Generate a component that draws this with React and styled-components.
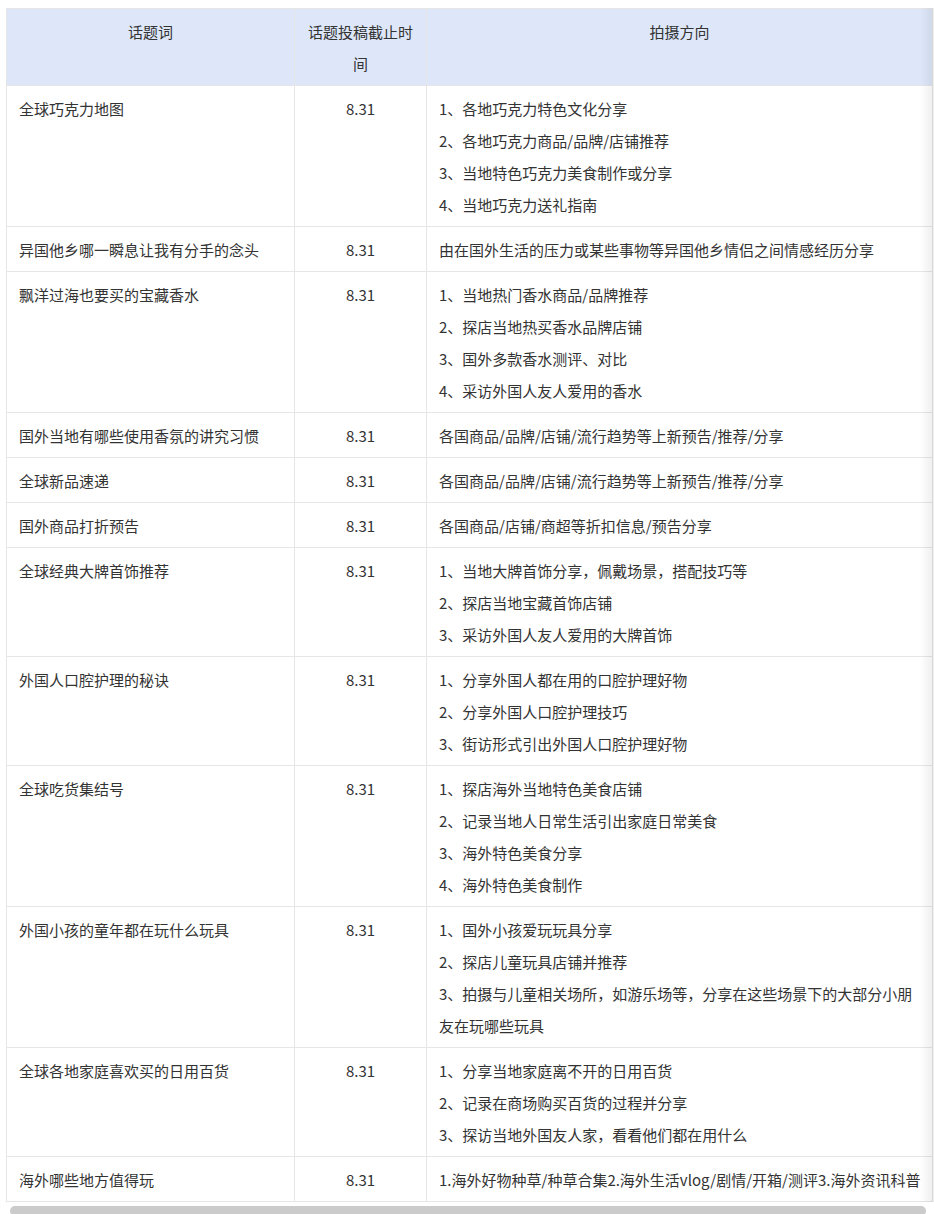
import styled, { createGlobalStyle } from 'styled-components'

const Global = createGlobalStyle`
  html, body {
    margin: 0;
    padding: 0;
    background: #fff;
  }
  body {
    font-family: "Noto Sans CJK SC", "Noto Sans", sans-serif;
    color: #333;
  }
`

const Page = styled.div`
  padding: 8px 0 0 6px;
`

const Scroller = styled.div`
  position: relative;
  overflow: hidden;
`

const Table = styled.table`
  border-collapse: collapse;
  table-layout: fixed;
  width: 926px;
  font-size: 15px;
  line-height: 32px;
`

const Th = styled.th`
  box-sizing: border-box;
  background: #dde7f9;
  font-weight: normal;
  text-align: center;
  vertical-align: top;
  padding: 7px 12px 5px;
  border: 1px solid #e6e6e6;
  width: ${p => p.$w}px;
`

const Td = styled.td`
  vertical-align: top;
  padding: 7px 12px 5px;
  border: 1px solid #e6e6e6;
  text-align: ${p => (p.$center ? 'center' : 'left')};
`

const Line = styled.div`
  white-space: ${p => (p.$nowrap ? 'nowrap' : 'normal')};
`

const EdgeShade = styled.div`
  position: absolute;
  top: 0;
  right: 0;
  bottom: 0;
  width: 14px;
  background: linear-gradient(to right, rgba(0, 0, 0, 0), rgba(0, 0, 0, 0.07));
  pointer-events: none;
`

const Track = styled.div`
  height: 12px;
  margin-top: 4px;
  padding: 0 8px 0 4px;
`

const Thumb = styled.div`
  height: 10px;
  border-radius: 5px;
  background: #cbcbcb;
`

const rows = [
  ['全球巧克力地图', [
    '1、各地巧克力特色文化分享',
    '2、各地巧克力商品/品牌/店铺推荐',
    '3、当地特色巧克力美食制作或分享',
    '4、当地巧克力送礼指南',
  ]],
  ['异国他乡哪一瞬息让我有分手的念头', ['由在国外生活的压力或某些事物等异国他乡情侣之间情感经历分享']],
  ['飘洋过海也要买的宝藏香水', [
    '1、当地热门香水商品/品牌推荐',
    '2、探店当地热买香水品牌店铺',
    '3、国外多款香水测评、对比',
    '4、采访外国人友人爱用的香水',
  ]],
  ['国外当地有哪些使用香氛的讲究习惯', ['各国商品/品牌/店铺/流行趋势等上新预告/推荐/分享']],
  ['全球新品速递', ['各国商品/品牌/店铺/流行趋势等上新预告/推荐/分享']],
  ['国外商品打折预告', ['各国商品/店铺/商超等折扣信息/预告分享']],
  ['全球经典大牌首饰推荐', [
    '1、当地大牌首饰分享，佩戴场景，搭配技巧等',
    '2、探店当地宝藏首饰店铺',
    '3、采访外国人友人爱用的大牌首饰',
  ]],
  ['外国人口腔护理的秘诀', [
    '1、分享外国人都在用的口腔护理好物',
    '2、分享外国人口腔护理技巧',
    '3、街访形式引出外国人口腔护理好物',
  ]],
  ['全球吃货集结号', [
    '1、探店海外当地特色美食店铺',
    '2、记录当地人日常生活引出家庭日常美食',
    '3、海外特色美食分享',
    '4、海外特色美食制作',
  ]],
  ['外国小孩的童年都在玩什么玩具', [
    '1、国外小孩爱玩玩具分享',
    '2、探店儿童玩具店铺并推荐',
    '3、拍摄与儿童相关场所，如游乐场等，分享在这些场景下的大部分小朋友在玩哪些玩具',
  ]],
  ['全球各地家庭喜欢买的日用百货', [
    '1、分享当地家庭离不开的日用百货',
    '2、记录在商场购买百货的过程并分享',
    '3、探访当地外国友人家，看看他们都在用什么',
  ]],
  ['海外哪些地方值得玩', ['1.海外好物种草/种草合集2.海外生活vlog/剧情/开箱/测评3.海外资讯科普'], true],
]

export default function App() {
  return (
    <Page>
      <Global />
      <Scroller>
        <Table>
          <thead>
            <tr>
              <Th $w={288}>话题词</Th>
              <Th $w={132}>话题投稿截止时间</Th>
              <Th $w={506}>拍摄方向</Th>
            </tr>
          </thead>
          <tbody>
            {rows.map(([topic, lines, single]) => (
              <tr key={topic}>
                <Td>{topic}</Td>
                <Td $center>8.31</Td>
                <Td>
                  {lines.map(l => (
                    <Line key={l} $nowrap={single}>{l}</Line>
                  ))}
                </Td>
              </tr>
            ))}
          </tbody>
        </Table>
        <EdgeShade />
      </Scroller>
      <Track>
        <Thumb />
      </Track>
    </Page>
  )
}
